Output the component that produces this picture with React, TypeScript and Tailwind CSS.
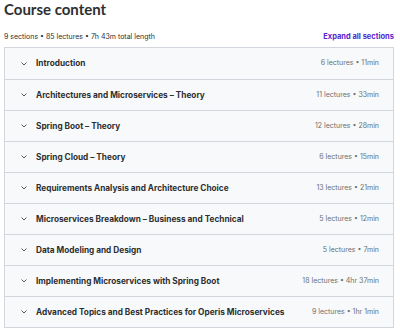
import React from "react";

const sections = [
  ["Introduction", "6 lectures • 11min"],
  ["Architectures and Microservices – Theory", "11 lectures • 33min"],
  ["Spring Boot – Theory", "12 lectures • 28min"],
  ["Spring Cloud – Theory", "6 lectures • 15min"],
  ["Requirements Analysis and Architecture Choice", "13 lectures • 21min"],
  ["Microservices Breakdown – Business and Technical", "5 lectures • 12min"],
  ["Data Modeling and Design", "5 lectures • 7min"],
  ["Implementing Microservices with Spring Boot", "18 lectures • 4hr 37min"],
  ["Advanced Topics and Best Practices for Operis Microservices", "9 lectures • 1hr 1min"],
];

export default function App() {
  return (
    <div
      className="w-[400px] h-[331px] bg-white overflow-hidden"
      style={{ fontFamily: "Inter, 'Liberation Sans', sans-serif" }}
    >
      <div className="pl-[4px] pr-[6px]">
        <h2
          className="text-[15px] leading-[18px] font-bold text-[#2d2f31]"
          style={{ fontFamily: "Lato, Inter, sans-serif" }}
        >
          Course content
        </h2>
        <div className="flex items-end justify-between mt-[12px] h-[12px]">
          <span className="text-[7px] text-[#2d2f31]">9 sections • 85 lectures • 7h 43m total length</span>
          <span className="text-[7.5px] font-bold text-[#5624d0]">Expand all sections</span>
        </div>
        <div className="mt-[5px] border border-[#d1d7dc]">
          {sections.map(([t, m], i) => (
            <div
              key={i}
              className={`flex items-center h-[31px] bg-[#f7f9fa] pl-[16px] pr-[14px] ${i > 0 ? "border-t border-[#d1d7dc]" : ""}`}
            >
              <svg width="6" height="4" viewBox="0 0 6 4" className="mr-[9px]">
                <path d="M0.5 0.5 L3 3 L5.5 0.5" fill="none" stroke="#2d2f31" strokeWidth="0.8" />
              </svg>
              <span className="flex-1 text-[8.25px] font-bold text-[#2d2f31]">{t}</span>
              <span className="text-[7px] text-[#6a6f73]">{m}</span>
            </div>
          ))}
        </div>
      </div>
    </div>
  );
}
